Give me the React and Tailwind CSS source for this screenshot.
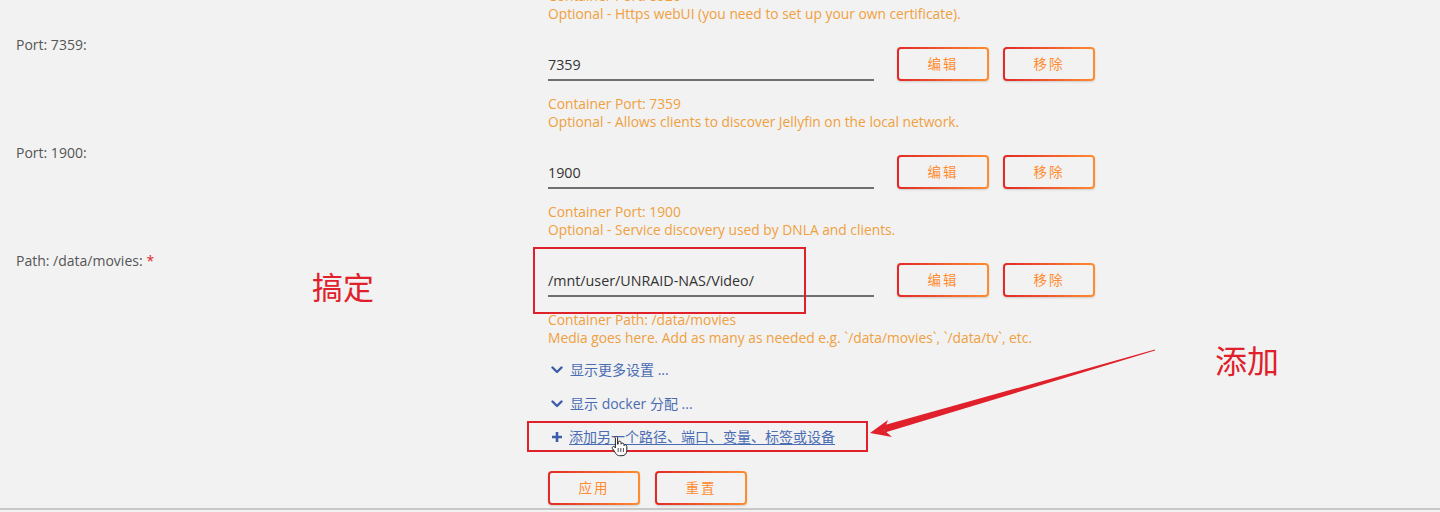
import React from "react";

const FONT = { fontFamily: '"Open Sans", "Noto Sans CJK SC", sans-serif' };

function GradButton({ children }) {
  return (
    <div className="w-[92px] h-[34px] rounded-[4px] p-[2px] bg-[linear-gradient(90deg,#e22828,#ff8c2f)] shadow-[0_1px_2px_rgba(0,0,0,0.15)]">
      <div className="w-full h-full rounded-[2px] bg-[#f2f2f2] flex items-center justify-center text-[13.5px] text-[#ff8c2f] tracking-[2px]">
        {children}
      </div>
    </div>
  );
}

function Desc({ lines }) {
  return (
    <div className="text-[13.8px] leading-[18px] text-[#f0a040]">
      {lines.map((l, i) => (
        <div key={i} className="whitespace-nowrap">{l}</div>
      ))}
    </div>
  );
}

function Row({ label, required, value, lines, mt }) {
  return (
    <div className={`flex ${mt}`}>
      <div className="w-[548px] pl-4 text-[14px] leading-[18px] text-[#555]">
        {label}
        {required && <span className="text-[#e22828] ml-1">*</span>}
      </div>
      <div className="flex flex-col">
        <div className="flex items-start mt-[11px]">
          <div className="w-[326px] h-[34px] pt-[3px] border-b-2 border-[#6f6f6f] flex items-center text-[14.3px] text-[#333]">
            {value}
          </div>
          <div className="ml-[23px] flex gap-[14px]">
            <GradButton>编辑</GradButton>
            <GradButton>移除</GradButton>
          </div>
        </div>
        <div className="mt-[14px]">
          <Desc lines={lines} />
        </div>
      </div>
    </div>
  );
}

function Chevron() {
  return (
    <svg width="12" height="12" viewBox="0 0 12 12" className="mr-[7px]">
      <path d="M1.5 3.5 L6 8 L10.5 3.5" fill="none" stroke="#3b5ea8" strokeWidth="2.4" strokeLinecap="round" strokeLinejoin="round" />
    </svg>
  );
}

export default function App() {
  return (
    <div className="relative w-[1440px] h-[512px] overflow-hidden bg-[#f2f2f2]" style={FONT}>
      <div className="-mt-[13px]">
        <div className="flex">
          <div className="w-[548px]" />
          <Desc lines={["Container Port: 8920", "Optional - Https webUI (you need to set up your own certificate)."]} />
        </div>
        <Row
          mt="mt-[13px]"
          label="Port: 7359:"
          value="7359"
          lines={["Container Port: 7359", "Optional - Allows clients to discover Jellyfin on the local network."]}
        />
        <Row
          mt="mt-[13px]"
          label="Port: 1900:"
          value="1900"
          lines={["Container Port: 1900", "Optional - Service discovery used by DNLA and clients."]}
        />
        <Row
          mt="mt-[13px]"
          label="Path: /data/movies:"
          required
          value="/mnt/user/UNRAID-NAS/Video/"
          lines={["Container Path: /data/movies", "Media goes here. Add as many as needed e.g. `/data/movies`, `/data/tv`, etc."]}
        />
        <div className="pl-[551px] text-[14px] leading-[18px] text-[#4a6cb3]">
          <div className="mt-[14px] flex items-center"><Chevron />显示更多设置 ...</div>
          <div className="mt-[16px] flex items-center"><Chevron />显示 docker 分配 ...</div>
          <div className="mt-[15px] flex items-center">
            <svg width="12" height="12" viewBox="0 0 12 12" className="mr-[6px]">
              <path d="M6 1v10M1 6h10" stroke="#3b5ea8" strokeWidth="2.6" />
            </svg>
            <span className="underline underline-offset-2">添加另一个路径、端口、变量、标签或设备</span>
          </div>
        </div>
        <div className="pl-[548px] mt-[25px] flex gap-[15px]">
          <GradButton>应用</GradButton>
          <GradButton>重置</GradButton>
        </div>
      </div>

      <div className="absolute left-0 right-0 top-[508px] h-[2px] bg-[#c8c8c8]" />

      {/* annotations */}
      <div className="absolute left-[533px] top-[247px] w-[273px] h-[67px] border-2 border-[#e0202a]" />
      <div className="absolute left-[527px] top-[421px] w-[341px] h-[31px] border-2 border-[#e0202a]" />
      <div className="absolute left-[312px] top-[266px] text-[31px] leading-[40px] text-[#e0202a]" style={{ fontFamily: '"Noto Sans CJK SC", sans-serif' }}>搞定</div>
      <div className="absolute left-[1215px] top-[338px] text-[32px] leading-[42px] text-[#e0202a]" style={{ fontFamily: '"Noto Sans CJK SC", sans-serif' }}>添加</div>
      <svg className="absolute left-0 top-0" width="1440" height="512" viewBox="0 0 1440 512">
        <polygon points="1155,349.6 1155,350.6 885,432.5 883,425.5" fill="#e0202a" />
        <polygon points="870,433 888,420 884,430 892,437" fill="#e0202a" />
      </svg>
      {/* hand cursor */}
      <svg className="absolute left-[610px] top-[435px]" width="20" height="22" viewBox="0 0 20 22">
        <path d="M6 1.5c1 0 1.6.7 1.6 1.6v6.2l.6-.2V7.6c0-.9.7-1.4 1.5-1.4s1.4.6 1.4 1.4v1.6c.2-.8.9-1.2 1.6-1.1.8.1 1.3.7 1.3 1.5v1c.3-.6.9-.9 1.5-.8.8.1 1.3.8 1.3 1.6v4.3c0 2.8-2 5-4.8 5H9.6c-1.6 0-2.8-.7-3.7-2l-3.4-5c-.5-.7-.3-1.6.4-2 .6-.4 1.4-.2 1.9.4l.6.8V3.1C4.4 2.2 5 1.5 6 1.5z" fill="#fff" stroke="#222" strokeWidth="1" />
        <path d="M8.2 13v4M10.8 13v4M13.4 13v4" stroke="#222" strokeWidth="0.8" />
      </svg>
    </div>
  );
}
